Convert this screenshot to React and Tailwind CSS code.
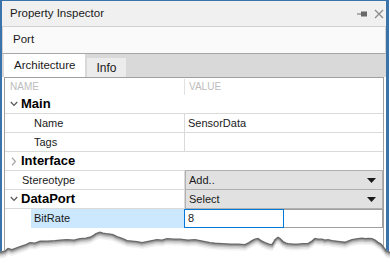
import React from 'react';

const TEAR = [
  [0, 23.7], [5, 22.5], [8, 20], [12, 21], [20, 18], [26, 16], [30, 14], [35, 14.5], [40, 12.7],
  [48, 12.5], [55, 12], [60, 11.5], [67, 11], [74, 11.5], [80, 10], [86, 9.5], [90, 8.7], [94, 6.5],
  [96, 5], [100, 3.7], [103, 4.5], [106, 5], [110, 5.5], [113, 6], [117, 8], [120, 9], [124, 10.5],
  [127, 12], [132, 12.5], [137, 13], [142, 14], [147, 13], [152, 12], [157, 11], [162, 11.5],
  [167, 10], [174, 10.5], [180, 10.5], [188, 11.5], [195, 11], [200, 12], [205, 13], [210, 14],
  [215, 14.7], [222, 15], [230, 15.5], [238, 15.5], [245, 16], [249, 14], [252, 12], [255, 10.5],
  [258, 10], [261, 12], [265, 14], [269, 15.5], [272, 16], [274, 13], [275, 11], [277, 9.5],
  [278, 8.7], [280, 10], [283, 13], [286, 14.5], [288, 15], [293, 15.5], [298, 15.5], [303, 15],
  [308, 15], [312, 12.5], [315, 10], [318, 10.5], [322, 10.5], [325, 11.5], [328, 11], [332, 12],
  [336, 12.5], [340, 13], [345, 13.7], [348, 12.5], [352, 11], [355, 10.5], [358, 10], [362, 9.5],
  [365, 10], [369, 9.8], [372, 10], [375, 11.5], [378, 13.7], [381, 15.5], [383, 18], [385, 20.5],
  [386, 22], [388, 23], [390, 24],
];

const tearLine = TEAR.map(([x, y], i) => `${i ? 'L' : 'M'}${x} ${y}`).join(' ');
const tearFill = `${tearLine} L390 40 L0 40 Z`;

function TornEdge() {
  return (
    <svg
      className="absolute left-0 top-[228px]"
      width="390"
      height="35"
      viewBox="0 0 390 35"
    >
      <path d={tearFill} fill="#ffffff" />
      <path d={tearLine} transform="translate(0 6)" fill="none" stroke="#f2f2f2" strokeWidth="2" />
      <path d={tearLine} transform="translate(0 4.5)" fill="none" stroke="#e0e0e0" strokeWidth="2" />
      <path d={tearLine} transform="translate(0 3)" fill="none" stroke="#c2c2c2" strokeWidth="2" />
      <path d={tearLine} transform="translate(0 1.6)" fill="none" stroke="#999999" strokeWidth="2" />
      <path d={tearLine} transform="translate(0 0.6)" fill="none" stroke="#6a6a6a" strokeWidth="1.4" />
    </svg>
  );
}

function ChevronDown() {
  return (
    <svg width="8" height="6" viewBox="0 0 8 6" className="shrink-0">
      <path d="M0.8 1 L4 4.4 L7.2 1" fill="none" stroke="#5a5a5a" strokeWidth="1.3" />
    </svg>
  );
}

function ChevronRight() {
  return (
    <svg width="6" height="9" viewBox="0 0 6 9" className="shrink-0">
      <path d="M1 0.8 L4.4 4.5 L1 8.2" fill="none" stroke="#a8a8a8" strokeWidth="1.3" />
    </svg>
  );
}

function Caret() {
  return (
    <svg width="9" height="5" viewBox="0 0 9 5">
      <path d="M0 0 H9 L4.5 5 Z" fill="#1a1a1a" />
    </svg>
  );
}

function GroupRow({ label, open }) {
  return (
    <div className="flex h-[19px] items-center border-b border-[#dadada] bg-white">
      <div className="flex w-[16px] justify-center pl-[2px]">
        {open ? <ChevronDown /> : <ChevronRight />}
      </div>
      <span className="text-[13px] font-bold text-black">{label}</span>
    </div>
  );
}

function PropRow({ label, value, indent = true, children }) {
  return (
    <div className="flex h-[19px] border-b border-[#dadada]">
      <div
        className={`flex w-[180px] items-center border-r border-[#dadada] bg-white ${
          indent ? 'pl-[29px]' : 'pl-[17px]'
        }`}
      >
        {label}
      </div>
      {children ?? <div className="flex flex-1 items-center bg-white pl-[3px]">{value}</div>}
    </div>
  );
}

function Dropdown({ text }) {
  return (
    <div className="-my-px flex flex-1 items-center justify-between border border-[#b0b0b0] bg-[#e1e1e1] pl-[3px] pr-[6px]">
      <span>{text}</span>
      <Caret />
    </div>
  );
}

export default function App() {
  return (
    <div className="relative h-[263px] w-[390px] overflow-hidden bg-white font-['Liberation_Sans',Arial,sans-serif] text-[11px] text-[#1a1a1a]">
      <div className="flex h-[256px] w-[389px] flex-col border-x-2 border-t border-[#3a72aa] border-r-[3px]">
        <div className="flex h-[25px] shrink-0 items-center justify-between bg-[#f0f0f0] pl-[8px] pr-[2px]">
          <span className="text-[11.5px] text-[#1a1a1a]">Property Inspector</span>
          <div className="flex items-center gap-[7px]">
            <svg width="10" height="6" viewBox="0 0 10 6">
              <rect x="4" y="0.5" width="6" height="5" fill="#6a6a6a" />
              <rect x="0" y="2.5" width="4" height="1" fill="#6a6a6a" />
            </svg>
            <svg width="10" height="10" viewBox="0 0 10 10">
              <path d="M1 1 L9 9 M9 1 L1 9" stroke="#8a8a8a" strokeWidth="1.2" />
            </svg>
          </div>
        </div>

        <div className="flex h-[28px] shrink-0 items-center border border-[#d2d2d2] border-b-[#a6a6a6] bg-[#fafafa] pl-[10px]">
          <span className="text-[11.5px]">Port</span>
        </div>

        <div className="flex h-[23px] shrink-0 items-end bg-[#d9d9d9] pl-[2px] pr-[2px]">
          <div className="flex h-[23px] w-[81px] items-center bg-white pl-[10px] text-[11.5px]">Architecture</div>
          <div className="ml-[2px] flex h-[19px] w-[39px] items-center justify-center bg-[#ececec] text-[12px]">
            Info
          </div>
        </div>

        <div className="mx-[2px] flex-1 border border-[#a0a0a0] bg-white text-[11px]">
          <div className="flex h-[17px] items-center text-[10px] text-[#bdbdbd]">
            <div className="flex h-[16px] w-[180px] items-center border-r border-[#e2e2e2] pl-[5px]">NAME</div>
            <div className="pl-[4px]">VALUE</div>
          </div>

          <GroupRow label="Main" open />
          <PropRow label="Name" value="SensorData" />
          <PropRow label="Tags" value="" />
          <GroupRow label="Interface" />
          <PropRow label="Stereotype" indent={false}>
            <Dropdown text="Add.." />
          </PropRow>
          <div className="flex h-[19px] border-b border-[#dadada]">
            <div className="flex w-[180px] items-center border-r border-[#dadada] bg-white">
              <div className="flex w-[16px] justify-center pl-[2px]">
                <ChevronDown />
              </div>
              <span className="text-[13px] font-bold text-black">DataPort</span>
            </div>
            <Dropdown text="Select" />
          </div>
          <div className="flex h-[19px]">
            <div className="flex w-[180px] pl-[26px]">
              <div className="flex flex-1 items-center bg-[#cce8ff] pl-[3px]">BitRate</div>
            </div>
            <div className="-ml-px flex w-[100px] items-center border border-[#0078d7] bg-white pl-[3px]">8</div>
            <div className="flex-1 border border-l-0 border-[#a0a0a0] bg-white" />
          </div>
        </div>
      </div>
      <TornEdge />
    </div>
  );
}
